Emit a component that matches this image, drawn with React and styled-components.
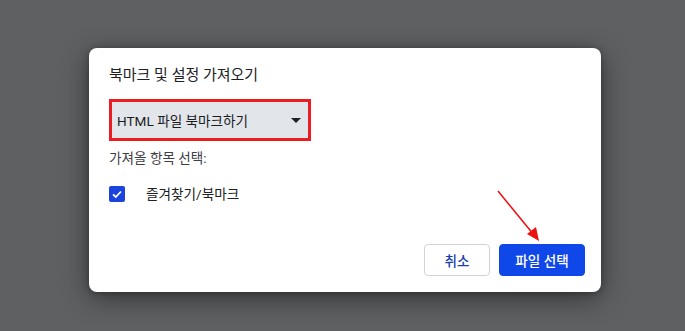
import styled, {createGlobalStyle} from "styled-components"

const GlobalStyle = createGlobalStyle`
    html, body {
        margin: 0;
        padding: 0;
        background: #5f6061;
    }
    body {
        font-family: Roboto, "Noto Sans CJK KR", "Noto Sans", sans-serif;
    }
`

const Page = styled.div`
    width: 685px;
    height: 331px;
    box-sizing: border-box;
    padding: 48px 0 0 89px;
    overflow: hidden;
    background: #5f6061;
`

const Dialog = styled.div`
    position: relative;
    width: 512px;
    height: 244px;
    box-sizing: border-box;
    padding: 17px 16px 16px 20px;
    background: #fff;
    border-radius: 8px;
    box-shadow: 0 6px 28px rgba(0, 0, 0, 0.45), 0 1px 6px rgba(0, 0, 0, 0.3);
    display: flex;
    flex-direction: column;
`

const Title = styled.h1`
    margin: 0;
    font-size: 15px;
    line-height: 20px;
    font-weight: 400;
    color: #202124;
`

const Highlight = styled.div`
    margin-top: 14px;
    width: 202px;
    box-sizing: border-box;
    border: 3px solid #ec1c24;
`

const Select = styled.div`
    height: 36px;
    display: flex;
    align-items: center;
    justify-content: space-between;
    padding: 0 7px 0 5px;
    background: #e2e5e9;
    font-size: 13.6px;
    font-weight: 400;
    color: #1b1c1f;
`

const Caret = styled.span`
    width: 0;
    height: 0;
    border-left: 5px solid transparent;
    border-right: 5px solid transparent;
    border-top: 5px solid #202124;
`

const Label = styled.div`
    margin-top: 7px;
    font-size: 13.6px;
    line-height: 20px;
    color: #3c4043;
`

const CheckRow = styled.label`
    margin-top: 16px;
    display: flex;
    align-items: center;
    gap: 21px;
    font-size: 13.6px;
    line-height: 20px;
    color: #202124;
`

const Box = styled.span`
    width: 16px;
    height: 16px;
    border-radius: 2px;
    background: #1a44dc;
    display: flex;
    align-items: center;
    justify-content: center;
`

const Actions = styled.div`
    margin-top: 40px;
    display: flex;
    justify-content: flex-end;
    gap: 9px;
`

const Button = styled.button`
    height: 32px;
    min-width: ${({$width}) => $width}px;
    box-sizing: border-box;
    border-radius: 4px;
    font-family: inherit;
    font-size: 13.6px;
    font-weight: 500;
    padding: 0 14px;
    border: 1px solid ${({$primary}) => ($primary ? "#0f47e8" : "#d0d4d9")};
    background: ${({$primary}) => ($primary ? "#0f47e8" : "#fff")};
    color: ${({$primary}) => ($primary ? "#fff" : "#1a3fae")};
`

const Pointer = styled.svg`
    position: absolute;
    left: 405px;
    top: 140px;
`

const App = () => (
    <>
        <GlobalStyle />
        <Page>
            <Dialog>
                <Title>북마크 및 설정 가져오기</Title>

                <Highlight>
                    <Select>
                        HTML 파일 북마크하기
                        <Caret />
                    </Select>
                </Highlight>

                <Label>가져올 항목 선택:</Label>

                <CheckRow>
                    <Box>
                        <svg width="12" height="12" viewBox="0 0 12 12">
                            <path d="M2 6.3 L4.8 9 L10 3.5" fill="none" stroke="#fff" strokeWidth="1.8" />
                        </svg>
                    </Box>
                    즐겨찾기/북마크
                </CheckRow>

                <Actions>
                    <Button $width={66}>취소</Button>
                    <Button $width={86} $primary>파일 선택</Button>
                </Actions>

                <Pointer width="50" height="60" viewBox="0 0 50 60">
                    <line x1="4" y1="3" x2="40" y2="47" stroke="#ee1111" strokeWidth="1.6" />
                    <polygon points="45,53 33,46 42,39" fill="#ee1111" />
                </Pointer>
            </Dialog>
        </Page>
    </>
)

export default App
